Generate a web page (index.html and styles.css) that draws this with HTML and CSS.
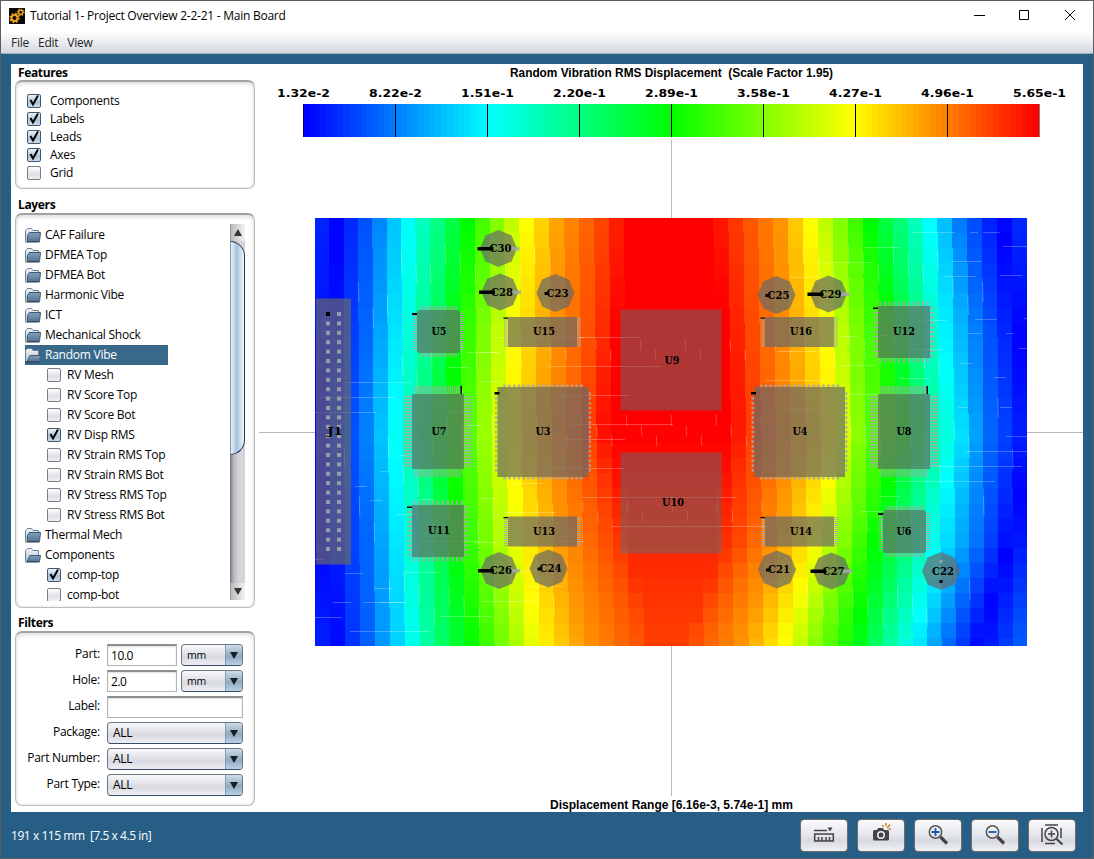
FILE: index.html
```html
<!DOCTYPE html>
<html lang="en">
<head>
<meta charset="utf-8">
<title>Tutorial 1- Project Overview 2-2-21 - Main Board</title>
<link rel="stylesheet" href="styles.css">
</head>
<body>
<svg class="defs" width="0" height="0" aria-hidden="true">
  <defs>
    <linearGradient id="folderFace" x1="0" y1="0" x2="0" y2="1"><stop offset="0" stop-color="#84a0bc"/><stop offset="1" stop-color="#55738f"/></linearGradient>
    <linearGradient id="folderBack" x1="0" y1="0" x2="0" y2="1"><stop offset="0" stop-color="#f4f7fa"/><stop offset="1" stop-color="#a9bccd"/></linearGradient>
    <symbol id="closed" viewBox="0 0 16 16"><path d="M.5 14.500V3.500L2.500 1.500h4L8 3.500h5.500V6" fill="url(#folderBack)" stroke="#6f8498"/><path d="M2.500 14.500V8.500L4.500 5.500h11L14.500 14.500Z" fill="url(#folderFace)" stroke="#3d5a76"/><path d="M.5 15h14" stroke="#29435c"/></symbol>
    <symbol id="open" viewBox="0 0 16 16"><path d="M.5 14.500V3.500L2.500 1.500h4L8 3.500h5.500V9" fill="url(#folderBack)" stroke="#6f8498"/><path d="M2 14.500 5 8.500h10.500L14.500 14.500Z" fill="url(#folderFace)" stroke="#3d5a76"/><path d="M.5 15h14" stroke="#29435c"/></symbol>
    <symbol id="tick" viewBox="0 0 14 14"><path d="M3.500 6 6 10.500 11 1.500" fill="none" stroke="#000" stroke-width="2"/></symbol>
  </defs>
</svg>
<div class="window">
  <header class="titlebar">
    <svg class="logo" width="16" height="16" viewBox="0 0 16 16"><rect width="16" height="16" fill="#0b0906"/><circle cx="5.500" cy="10" r="3" fill="none" stroke="#eba21c" stroke-width="2"/><circle cx="5.500" cy="10" r="4.500" fill="none" stroke="#eba21c" stroke-width="1.500" stroke-dasharray="1.800 1.734"/><circle cx="11.700" cy="4.300" r="2.100" fill="none" stroke="#eba21c" stroke-width="1.500"/><circle cx="11.700" cy="4.300" r="3.300" fill="none" stroke="#eba21c" stroke-width="1.200" stroke-dasharray="1.300 1.292"/></svg>
    <span class="caption">Tutorial 1- Project Overview 2-2-21 - Main Board</span>
    <svg class="winbtns" width="104" height="12" viewBox="0 0 104 12" fill="none" stroke="#000"><path d="M0 6.500h11M45.500 1.500h9v9h-9ZM91 1l10 10M101 1 91 11"/></svg>
  </header>
  <nav class="menubar"><span>File</span><span>Edit</span><span>View</span></nav>
  <main class="workspace">
    <aside class="sidebar">
      <h2>Features</h2>
      <section class="group features">
        <label><i class="check on"><svg><use href="#tick"/></svg></i>Components</label>
        <label><i class="check on"><svg><use href="#tick"/></svg></i>Labels</label>
        <label><i class="check on"><svg><use href="#tick"/></svg></i>Leads</label>
        <label><i class="check on"><svg><use href="#tick"/></svg></i>Axes</label>
        <label><i class="check"></i>Grid</label>
      </section>
      <h2 class="h-layers">Layers</h2>
      <section class="group layers">
        <div class="tree">
          <div class="node"><svg><use href="#closed"/></svg>CAF Failure</div>
          <div class="node"><svg><use href="#closed"/></svg>DFMEA Top</div>
          <div class="node"><svg><use href="#closed"/></svg>DFMEA Bot</div>
          <div class="node"><svg><use href="#closed"/></svg>Harmonic Vibe</div>
          <div class="node"><svg><use href="#closed"/></svg>ICT</div>
          <div class="node"><svg><use href="#closed"/></svg>Mechanical Shock</div>
          <div class="node selected"><svg><use href="#open"/></svg>Random Vibe</div>
          <div class="leaf"><i class="check"></i>RV Mesh</div>
          <div class="leaf"><i class="check"></i>RV Score Top</div>
          <div class="leaf"><i class="check"></i>RV Score Bot</div>
          <div class="leaf"><i class="check on"><svg><use href="#tick"/></svg></i>RV Disp RMS</div>
          <div class="leaf"><i class="check"></i>RV Strain RMS Top</div>
          <div class="leaf"><i class="check"></i>RV Strain RMS Bot</div>
          <div class="leaf"><i class="check"></i>RV Stress RMS Top</div>
          <div class="leaf"><i class="check"></i>RV Stress RMS Bot</div>
          <div class="node"><svg><use href="#closed"/></svg>Thermal Mech</div>
          <div class="node"><svg><use href="#open"/></svg>Components</div>
          <div class="leaf"><i class="check on"><svg><use href="#tick"/></svg></i>comp-top</div>
          <div class="leaf"><i class="check"></i>comp-bot</div>
        </div>
        <div class="scroll"><div class="arrow up"></div><div class="track"><div class="thumb"></div></div><div class="arrow down"></div></div>
      </section>
      <h2 class="h-filters">Filters</h2>
      <section class="group filters">
        <span class="name">Part:</span><span class="field">10.0</span><span class="combo small">mm<b></b></span>
        <span class="name">Hole:</span><span class="field">2.0</span><span class="combo small">mm<b></b></span>
        <span class="name">Label:</span><span class="field wide"></span>
        <span class="name">Package:</span><span class="combo wide">ALL<b></b></span>
        <span class="name">Part Number:</span><span class="combo wide">ALL<b></b></span>
        <span class="name">Part Type:</span><span class="combo wide">ALL<b></b></span>
      </section>
    </aside>
    <svg class="plot" id="plot" width="824" height="748" viewBox="259 64 824 748"></svg>
  </main>
  <footer class="status">
    <span class="dims">191 x 115 mm&nbsp; [7.5 x 4.5 in]</span>
    <div class="tools">
      <span class="tool"><svg width="24" height="24" viewBox="0 0 24 24" fill="none" stroke="#444"><path d="M2 7.500h13" stroke-width="1.500"/><path d="M15.500 4.500h5L18 8.500Z" fill="#444" stroke="none"/><path d="M2.700 11h18.600v7H2.700Z" stroke-width="1.500"/><path d="M6.500 18v-4M10 18v-4M14 18v-4M17.500 18v-4" stroke-width="1.500"/></svg></span>
      <span class="tool"><svg width="24" height="24" viewBox="0 0 24 24"><path d="M4 8.500Q4 7 5.500 7H8l1-2h5l1 2h3.500Q20 7 20 8.500V16q0 1.500-1.500 1.500h-13Q4 17.500 4 16Z" fill="#444"/><circle cx="12" cy="12" r="4" fill="#eef0f4"/><circle cx="12" cy="12" r="2.500" fill="#444"/><path d="M14.500 4 13.500 2M17 3V0M19 4l2-2.500M19.500 6H22M18 5l1-1" stroke="#c98220" stroke-width="1.400" fill="none"/></svg></span>
      <span class="tool"><svg width="24" height="24" viewBox="0 0 24 24" fill="none"><path d="m14.500 14 6.500 6.500" stroke="#444" stroke-width="3.200"/><circle cx="9.500" cy="9" r="6.200" stroke="#555" stroke-width="1.500"/><path d="M5.500 9h8M9.500 5v8" stroke="#1558a8" stroke-width="1.800"/></svg></span>
      <span class="tool"><svg width="24" height="24" viewBox="0 0 24 24" fill="none"><path d="m14.500 14 6.500 6.500" stroke="#444" stroke-width="3.200"/><circle cx="9.500" cy="9" r="6.200" stroke="#555" stroke-width="1.500"/><path d="M5.500 9h8" stroke="#1558a8" stroke-width="1.800"/></svg></span>
      <span class="tool"><svg width="24" height="24" viewBox="0 0 24 24" fill="none" stroke="#444" stroke-width="1.500"><circle cx="11.500" cy="11" r="6.500"/><path d="M8 11h7M11.500 7.500v7M5 2h13M5 20.500h10M2 5v14M21 5v10"/><path d="m16 15.500 6.500 6" stroke-width="2"/></svg></span>
    </div>
  </footer>
</div>
<script src="plot.js"></script>
</body>
</html>
```

FILE: styles.css
```css
* { box-sizing: border-box; }
body { margin: 0; font: 12px/16px "Open Sans", "Noto Sans", sans-serif; letter-spacing: -0.25px; color: #000; }
.defs { display: block; }
.window { width: 1094px; height: 859px; border: 1px solid #5d5d5d; background: #265e85; display: flex; flex-direction: column; overflow: hidden; }
.titlebar { height: 30px; flex: none; background: #fff; display: flex; align-items: center; padding: 0 15px 0 8px; }
.logo { flex: none; margin-top: -1px; }
.winbtns { margin-top: -2px; }
.caption { margin-left: 5px; flex: 1; white-space: pre; }
.menubar { height: 23px; flex: none; background: linear-gradient(#fff, #eceef1 45%, #d3d6de); border-bottom: 1px solid #a4b0bf; display: flex; gap: 9px; padding: 4px 10px 0; color: #262626; }
.workspace { flex: none; margin: 10px 10px 0; height: 748px; background: #fff; display: flex; justify-content: space-between; }
.sidebar { width: 244px; padding: 1px 0 0 4px; display: flex; flex-direction: column; }
h2 { margin: 0 0 0 3px; flex: none; font-size: 12px; line-height: 16px; height: 15px; letter-spacing: -0.35px; font-weight: 700; }
.h-layers { margin-top: 8px; }
.h-filters { margin-top: 7px; }
.group { width: 240px; flex: none; border: 1px solid #bcbcbc; border-top: 2px solid #a2a2a2; border-radius: 7px; box-shadow: inset 0 2px 4px #ddd, inset 0 0 2px #d8d8d8; }
.features { height: 109px; padding: 10px 11px 0; display: flex; flex-direction: column; }
.features label { display: flex; flex: none; align-items: center; height: 18px; gap: 9px; }
.check { width: 14px; height: 14px; flex: none; border: 1px solid #777d86; border-radius: 2px; background: linear-gradient(#fff, #dedfe6 60%, #f0f1f6); display: block; }
.check.on { border-color: #415873; background: linear-gradient(#edf3f8, #abc1d5 60%, #cbddec); }
.check svg { display: block; width: 14px; height: 14px; margin: -1px; overflow: visible; }
.layers { height: 395px; margin-top: 1px; padding: 9px 9px 6px 9px; display: flex; justify-content: space-between; }
.tree { width: 200px; height: 377px; padding-top: 1px; overflow: hidden; }
.node, .leaf { height: 20px; display: flex; align-items: center; white-space: nowrap; }
.node svg { width: 16px; height: 16px; margin: -1px 4px 0 0; flex: none; }
.leaf { padding-left: 22px; gap: 6px; }
.leaf .check { margin-top: -1px; }
.selected { width: 143px; background: #39698a; color: #fff; }
.scroll { width: 15px; height: 376px; display: flex; flex-direction: column; background: #d4d5d9; }
.arrow { height: 17px; flex: none; border-left: 1px solid #999; background: linear-gradient(90deg, #bbb, #f2f3f5); display: flex; align-items: center; justify-content: center; }
.arrow::before { content: ""; border: 4px solid transparent; }
.up::before { border-bottom: 7px solid #333; border-top: 0; }
.down::before { border-top: 7px solid #333; border-bottom: 0; }
.track { flex: 1; background: linear-gradient(90deg, #777, #b8b9bf 25%, #d4d5da 60%); }
.thumb { height: 214px; border: 1.500px solid #274460; border-left-color: #7894ac; border-radius: 0 15px 15px 0; background: linear-gradient(90deg, #e9f1f8, #a8c1d7 45%, #e0effa 90%); }
.filters { height: 175px; margin-top: 1px; padding: 11px 11px 0 0; display: grid; grid-template-columns: 84px 70px 62px; column-gap: 4px; grid-auto-rows: 22px; row-gap: 4px; justify-content: end; }
.name { text-align: right; line-height: 20px; padding-right: 2px; margin-right: 1px; white-space: nowrap; }
.field { border: 1px solid #b4b4b4; border-top: 2px solid #8d8d8d; padding: 1px 3px; line-height: 18px; letter-spacing: -0.45px; box-shadow: inset 0 1px 2px #ddd; }
.wide { grid-column: 2 / 4; }
.combo { height: 22px; border: 1px solid #6c7683; border-bottom-color: #364e68; border-radius: 4px; background: linear-gradient(#f8f9fb, #d8dae1 60%, #eeeff5); padding-left: 5px; display: flex; align-items: center; justify-content: space-between; overflow: hidden; line-height: 20px; }
.small { font-size: 10.500px; }
.combo b { width: 17px; height: 20px; border-left: 1px solid #849bb1; background: linear-gradient(#cddbe6, #8faac2 55%, #bad0e4); display: flex; align-items: center; justify-content: center; }
.combo b::before { content: ""; border: 4px solid transparent; border-top: 7px solid #1c1c1c; border-bottom: 0; }
.plot { flex: none; display: block; }
.status { flex: 1; display: flex; align-items: center; justify-content: space-between; padding: 0 17px 0 10px; color: #fff; }
.dims { letter-spacing: -0.45px; padding-top: 2px; }
.tools { display: flex; gap: 9px; }
.tool { width: 48px; height: 33px; border: 1px solid #706d68; border-radius: 4px; background: linear-gradient(#fbfbfd, #e1e3ea 55%, #d7d9e1 65%, #eff0f5); display: flex; align-items: center; justify-content: center; }
.ttl { font: bold 12px "Liberation Sans", Arial, sans-serif; letter-spacing: 0; }
.scale { font: bold 10.500px "DejaVu Sans", sans-serif; letter-spacing: 0; }
.ref { font: bold 10.500px "DejaVu Serif", serif; letter-spacing: 0; }
.axis { stroke: #b9b9b9; }
.body { fill: #686868; fill-opacity: .7; }
.body.thin { fill-opacity: .52; }
.lead { fill: #a8a8a8; fill-opacity: .85; }
.pin { fill: #000; }
.mesh { stroke: #fff; stroke-opacity: .25; stroke-width: 1; fill: none; }
```

FILE: plot.js
```js
const plot = document.getElementById('plot');
const parts = [];
const rect = (x, y, w, h, attrs) => parts.push(`<rect x="${x}" y="${y}" width="${w}" height="${h}" ${attrs}/>`);
const text = (x, y, w, cls, s) => parts.push(`<text x="${x}" y="${y}" text-anchor="middle" textLength="${w}" lengthAdjust="spacingAndGlyphs" class="${cls}" xml:space="preserve">${s}</text>`);

function rainbow(v) {
  v = Math.max(0, Math.min(1, v)) * 4;
  const u = n => Math.round(255 * Math.max(0, Math.min(1, n)));
  return `rgb(${u(v - 2)},${u(v < 2 ? v : 4 - v)},${u(2 - v)})`;
}

// axes through the board centre
parts.push('<path class="axis" d="M671.5 140V796M259 432.5H1083"/>');

// colour scale
const steps = 128;
for (let i = 0; i < steps; i++) rect(303 + i * 5.75, 104, 6, 33, `fill="${rainbow(i / (steps - 1))}" shape-rendering="crispEdges"`);
['1.32e-2', '8.22e-2', '1.51e-1', '2.20e-1', '2.89e-1', '3.58e-1', '4.27e-1', '4.96e-1', '5.65e-1'].forEach((s, i) => {
  rect(303 + i * 92, 104, 1, 33, i % 8 ? 'fill="#000"' : 'fill="#000" fill-opacity=".5"');
  text(303.5 + i * 92, 97, 53, 'scale', s);
});

// contour abscissae, one column per sampled height
const ys = [225, 330, 432, 540, 640];
const peak = [1, 1, 1, .965, .94];
const left = [[0, 337, 330, 318, 325, 335], [.1, 372, 366, 360, 367, 370], [.25, 407, 401, 394, 402, 409], [.375, 438, 430, 422, 430, 434],
  [.5, 467, 457, 450, 456, 470], [.625, 496, 484, 478, 488, 505], [.75, 526, 513, 508, 520, 538], [.85, 560, 552, 545, 560, 582], [.93, 600, 592, 585, 610, 648], [1, 628, 618, 608, 650, 671]];
const right = [[0, 1002, 1018, 1032, 1010, 980], [.1, 965, 982, 990, 980, 950], [.25, 930, 942, 955, 938, 914], [.375, 903, 915, 925, 908, 883],
  [.5, 870, 890, 900, 875, 855], [.625, 841, 855, 860, 845, 818], [.75, 810, 826, 838, 815, 785], [.85, 783, 788, 795, 778, 745], [.93, 743, 752, 757, 740, 690], [1, 712, 725, 730, 695, 671]];
function at(row, y) {
  let k = 0;
  while (k < 3 && y > ys[k + 1]) k++;
  const t = Math.max(0, Math.min(1, (y - ys[k]) / (ys[k + 1] - ys[k])));
  return row[k] + (row[k + 1] - row[k]) * t;
}
function field(x, y) {
  const side = x < 671 ? left : right;
  const dir = x < 671 ? 1 : -1;
  const xs = side.map(r => at(r.slice(1), y));
  if ((x - xs[0]) * dir < 0) return Math.abs(x - xs[0]) * .0022;
  for (let i = 0; i < xs.length - 1; i++) {
    if ((x - xs[i + 1]) * dir <= 0) {
      const v = side[i][0] + (side[i + 1][0] - side[i][0]) * (x - xs[i]) / (xs[i + 1] - xs[i]);
      return Math.min(v, at(peak, y));
    }
  }
  return at(peak, y);
}
const edge = (i, t) => {
  const top = i <= 8 ? 315 + 14.35 * i : 429.8 + 14.93 * (i - 8);
  const bottom = i <= 40 ? 315 + 14.95 * i : 913 + 14.25 * (i - 40);
  return top + (bottom - top) * t;
};
for (let r = 0; r < 29; r++) {
  const y0 = Math.min(218 + r * 15, 646), y1 = Math.min(y0 + 15, 646), t = r / 28;
  for (let c = 0; c < 48; c++) {
    const x0 = Math.round(edge(c, t)), x1 = c === 47 ? 1027 : Math.round(edge(c + 1, t));
    rect(x0, y0, x1 - x0, y1 - y0, `fill="${rainbow(field((x0 + x1) / 2, y0 + 7))}" shape-rendering="crispEdges"`);
  }
}

// mesh seams
let seams = '';
for (let i = 1; i < 48; i++) {
  const a = edge(i, 0), b = edge(i, 1), n = Math.max(1, Math.round(Math.abs(b - a)));
  for (let k = 0; k < n; k++) {
    const t = (k + .3 + (i % 3) * .12) / n;
    const y = 218 + 428 * t;
    const central = i > 16 && i < 33;
    if (y < 625 && (!central || (y > 335 && y < 520))) seams += `M${edge(i, t).toFixed(1)} ${y.toFixed(1)}l.6 ${central ? 11 : 20}`;
  }
}
[[913,232,42],[970,232,8],[983,232,17],[1003,246,24],[863,247,37],[951,261,31],[818,262,54],[1000,275,22],[944,276,32],[790,277,30],
 [1024,318,3],[922,320,24],[975,319,22],[968,333,14],[880,335,8],[1006,333,8],[1019,348,8],[910,349,32],[838,336,20],[960,363,12],
 [778,351,38],[994,377,12],[900,378,30],[838,365,37],[495,337,90],[580,337,60],[480,352,20],[549,366,112],[480,381,24],[555,395,75],
 [571,424,102],[347,382,64],[320,397,75],[315,412,62],[467,352,30],[448,367,22],[448,411,18],[467,425,14],[766,380,60],[840,394,70],
 [778,409,50],[958,407,10],[1000,407,12],[1006,436,21],[965,451,62],[915,466,107],[892,481,103],[880,496,20],[860,511,35],[670,497,66],
 [670,526,100],[582,497,93],[612,526,60],[563,439,62],[540,468,85],[513,483,30],[505,512,51],[480,498,15],[400,455,10],[380,471,7],
 [355,486,12],[370,500,12],[396,514,22],[420,499,14],[420,541,62],[405,572,35],[345,573,18],[374,588,18],[363,602,43],[315,617,27],
 [350,631,80],[440,616,52],[482,601,55],[475,542,24],[530,586,34],[555,541,29],[380,602,26],[333,602,18],[515,571,14],[315,559,9]]
  .forEach(([x, y, w]) => { seams += `M${x} ${y + .5}h${w}`; });
parts.push(`<path class="mesh" d="${seams}"/>`);

// leads along one edge
function comb(x, y, n, pitch, w, h, vertical) {
  for (let i = 0; i < n; i++) {
    rect((vertical ? x : x + i * pitch).toFixed(2), (vertical ? y + i * pitch : y).toFixed(2), w, h, 'class="lead"');
  }
}
function quad(x, y, w, h, n, pitch, t, len) {
  const sx = x + (w - (n - 1) * pitch - t) / 2, sy = y + (h - (n - 1) * pitch - t) / 2;
  comb(sx, y - len, n, pitch, t, len, false);
  comb(sx, y + h, n, pitch, t, len, false);
  comb(x - len, sy, n, pitch, len, t, true);
  comb(x + w, sy, n, pitch, len, t, true);
}
const pin = (x, y, w, h) => rect(x, y, w, h, 'class="pin"');
const body = (x, y, w, h, r = 0, cls = '') => rect(x, y, w, h, `rx="${r}" class="body ${cls}"`);
const label = (x, y, s) => text(x, y + 4, s.length === 2 ? 15 : 22, 'ref', s);

body(316, 298.5, 35, 266);
for (let i = 0; i < 26; i++) {
  const y = 312 + i * 9.4;
  if (y < 553) { rect(326, y, 4, 4, i ? 'class="lead"' : 'class="pin"'); rect(337, y, 4, 4, 'class="lead"'); }
}
label(335, 431, 'J1');

[[417, 310, 'U5', 439], [883, 510, 'U6', 904]].forEach(([x, y, s, lx]) => {
  quad(x, y, 43, 43, 19, 2, 1, 4); body(x, y, 43, 43, 3); pin(x - 5, y + 3, 5, 2); label(lx, y + 21, s);
});
[[412, 'U7', 439], [878, 'U8', 904]].forEach(([x, s, lx]) => {
  comb(x + 2, 386, 24, 2, 1, 8, false); comb(x + 2, 469, 24, 2, 1, 8, false);
  comb(x - 8, 396, 24, 3, 8, 1.5, true); comb(x + 52, 396, 24, 3, 8, 1.5, true);
  body(x, 394, 52, 75); pin(x + 48.500, 386, 1.500, 8); label(lx, 431, s);
});
[[878, 306, 'U12', 904], [412, 505, 'U11', 439]].forEach(([x, y, s, lx]) => {
  quad(x, y, 52, 52, 11, 4.75, 2, 4.500); body(x, y, 52, 52); pin(x - 5, y + 1.500, 5, 1.500); label(lx, y + 25, s);
});
[[497.500, 'U3', 543], [754, 'U4', 800]].forEach(([x, s, lx]) => {
  quad(x, 387, 91, 90, 17, 4.8, 2.500, 2.500); body(x, 387, 91, 90); pin(x - 3, 392, 5, 2.500); label(lx, 431, s);
});
[[508, 317, 'U15', 544], [765, 317, 'U16', 801], [508, 516.500, 'U13', 544], [765, 516.500, 'U14', 801]].forEach(([x, y, s, lx]) => {
  comb(x - 4, y + .5, 15, 2, 4, 1, true); comb(x + 69, y + .5, 15, 2, 4, 1, true);
  body(x, y, 69, 30); pin(x - 4.500, y + .5, 4.500, 1.200); label(lx, y + 14, s);
});
body(620.500, 309.500, 101, 101, 0, 'thin'); label(672, 360, 'U9');
body(620.500, 452.500, 101, 101, 0, 'thin'); label(673, 502, 'U10');

function can(cx, cy, s, kind) {
  const pts = [];
  for (let i = 0; i < 8; i++) {
    const a = Math.PI / 4 * i, r = kind === 'axial' ? 18.5 : 19;
    pts.push((cx + r * Math.cos(a)).toFixed(1) + ',' + (cy + r * Math.sin(a)).toFixed(1));
  }
  parts.push(`<polygon points="${pts.join(' ')}" class="body"/>`);
  if (kind === 'axial') { pin(cx - 21, cy - 1.500, 16, 3.500); rect(cx + 11, cy - 1.500, 10, 3.500, 'class="lead"'); }
  if (kind === 'radial') pin(cx - 11, cy - 1, 3, 3);
  if (kind === 'upright') { pin(cx - 1.500, cy + 9, 3, 3); rect(cx - 1.500, cy - 11, 3, 3, 'class="lead"'); }
  label(cx + 2, cy - (kind === 'axial' ? .3 : .1), s);
}
can(498.500, 248.500, 'C30', 'axial');
can(500, 292, 'C28', 'axial');
can(555.500, 293, 'C23', 'radial');
can(776.500, 295, 'C25', 'radial');
can(828.500, 294, 'C29', 'axial');
can(499, 570.500, 'C26', 'axial');
can(548.500, 568.500, 'C24', 'radial');
can(777, 569.500, 'C21', 'radial');
can(831.500, 571, 'C27', 'axial');
can(941, 571, 'C22', 'upright');

text(671.5, 77, 323, 'ttl', 'Random Vibration RMS Displacement  (Scale Factor 1.95)');
text(671.5, 809, 243, 'ttl', 'Displacement Range [6.16e-3, 5.74e-1] mm');
plot.innerHTML = parts.join('');
```
